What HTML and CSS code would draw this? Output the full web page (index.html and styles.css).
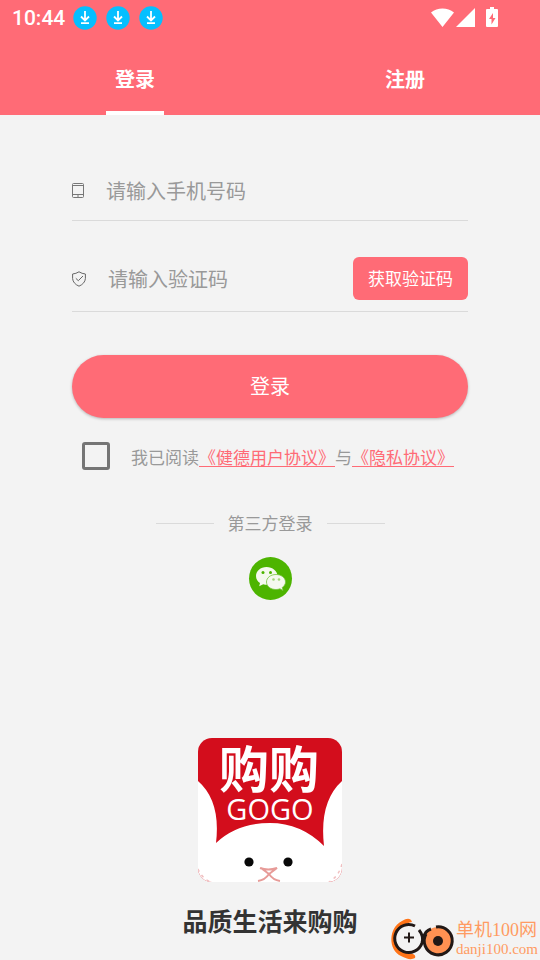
FILE: index.html
```html
<!DOCTYPE html>
<html lang="zh-CN">
<head>
<meta charset="utf-8">
<meta name="viewport" content="width=device-width, initial-scale=1">
<title>登录</title>
<link rel="stylesheet" href="styles.css">
</head>
<body>
<header class="top">
  <div class="status">
    <span class="time">10:44</span>
    <span class="downloads">
      <svg class="dl" viewBox="0 0 24 24"><circle cx="12" cy="12" r="11.700" fill="#05bfff"/><path d="M12 5v9M8 10.500l4 4 4-4M8 17.200h8" fill="none" stroke="#fff" stroke-width="1.800"/></svg>
      <svg class="dl" viewBox="0 0 24 24"><circle cx="12" cy="12" r="11.700" fill="#05bfff"/><path d="M12 5v9M8 10.500l4 4 4-4M8 17.200h8" fill="none" stroke="#fff" stroke-width="1.800"/></svg>
      <svg class="dl" viewBox="0 0 24 24"><circle cx="12" cy="12" r="11.700" fill="#05bfff"/><path d="M12 5v9M8 10.500l4 4 4-4M8 17.200h8" fill="none" stroke="#fff" stroke-width="1.800"/></svg>
    </span>
    <svg class="signals" viewBox="0 0 68 20" fill="#fff"><path d="M0 4.500C6.500-.7 16.500-.7 23 4.500L11.500 19ZM25 19 44 0V19Z"/><path fill-rule="evenodd" d="M59 -1h4v2h3q1 0 1 1v16q0 1-1 1H56q-1 0-1-1V2q0-1 1-1h3ZM62 5 58 11h2.500v5.500l4-6.500H62Z"/></svg>
  </div>
  <nav class="tabs">
    <button class="tab active" type="button">登录</button>
    <button class="tab" type="button">注册</button>
  </nav>
</header>
<main class="page">
  <form class="form">
    <div class="field">
      <svg class="phone" viewBox="0 0 12 16" fill="none" stroke="#777"><rect x=".5" y=".5" width="11" height="14" rx="1"/><path d="M.5 2.500h11M.5 11.500h11M5 13h2"/></svg>
      <input type="tel" placeholder="请输入手机号码" aria-label="手机号码">
    </div>
    <div class="field code">
      <svg class="shield" viewBox="0 0 14 16" fill="none" stroke="#666"><path d="M7 .8Q10 2.700 13.400 3V7.500Q13 12.500 7 15.200 1 12.500.6 7.500V3Q4 2.700 7 .8Z"/><path d="M3.800 7.300 6.300 9.700 11 5"/></svg>
      <input type="text" placeholder="请输入验证码" aria-label="验证码">
      <button class="get-code" type="button">获取验证码</button>
    </div>
    <button class="submit" type="submit">登录</button>
    <div class="agree">
      <input type="checkbox" id="agree">
      <label for="agree">我已阅读<a href="#">《健德用户协议》</a>与<a href="#">《隐私协议》</a></label>
    </div>
  </form>
  <div class="divider"><span>第三方登录</span></div>
  <button class="wechat" type="button" aria-label="微信登录">
    <svg viewBox="0 0 43 43"><circle cx="21.500" cy="21.500" r="21.500" fill="#4db400"/><path d="M17.500 10C11.500 10 7 14 7 19c0 3 1.500 5.500 4 7l-.8 3.200 4-2q4 1 8 0C26 26 28.500 23 28.500 19c0-5-5-9-11-9Z" fill="#f5f9ef"/><path d="M27 17.500c-5.500 0-9.500 3.300-9.500 7.500s4 7.500 9.500 7.500q2 0 4-.7l3 1.700-.8-3c2-1.300 3.300-3.300 3.300-5.500 0-4.200-4.300-7.500-9.500-7.500Z" fill="#f5f9ef" stroke="#75c43b" stroke-width=".8"/><g fill="#4db400"><circle cx="14" cy="15.500" r="1.500"/><circle cx="21.500" cy="15.500" r="1.500"/></g><g fill="#a4d77c"><circle cx="24.500" cy="22.500" r="1.300"/><circle cx="30" cy="22.500" r="1.300"/></g></svg>
  </button>
  <svg class="brand" viewBox="0 0 144 144">
    <clipPath id="tile"><rect width="144" height="144" rx="14"/></clipPath>
    <g clip-path="url(#tile)">
      <path d="M0 0H144V144H0Z" fill="#d30d1c"/>
      <path d="M0 43Q23 63 18 105 39 85 72 85 103 85 126 108 121 64 144 43V144H0Z" fill="#fff"/>
      <circle cx="51" cy="124" r="4.600" fill="#080808"/><circle cx="90" cy="124" r="4.600" fill="#080808"/>
      <path d="M62 130q8 3 17 0l-8 6-8-6M71 136q-4 6-11 7M71 136q4 6 11 7" fill="none" stroke="#e79b98" stroke-width="2"/>
      <path d="M0 131q3 8 12 13M144 126q-3 12-13 18" fill="none" stroke="#f1bfc0" stroke-width="1.500" stroke-dasharray="3 4"/>
    </g>
    <text class="brand-cn" x="71" y="50" text-anchor="middle">购购</text>
    <text class="brand-en" x="72" y="82" text-anchor="middle">GOGO</text>
  </svg>
  <h1 class="slogan">品质生活来购购</h1>
</main>
<aside class="watermark">
  <svg viewBox="0 0 64 43" fill="none"><path d="M22 5Q20-1 12 4C-2 11-2 33 11 39q9 5 14 2 1-3-2-4-13-1-18-10C2 16 9 8 22 5Z" fill="#ff7418"/><path d="M27.500 10A14 14 0 1 0 32 26Q34 21 31 17" fill="#f3f3f3"/><path d="M25 9A14 14 0 1 0 32 26Q34 19 29 13" stroke="#211816" stroke-width="3"/><path d="M19 15.500v10M14 20.500h10" stroke="#211816" stroke-width="2"/><circle cx="48" cy="24" r="14" fill="#ff9152"/><path d="M46 10A14 14 0 1 1 36 17" stroke="#211816" stroke-width="3"/><path d="M34 20Q35 14 41 12" stroke="#211816" stroke-width="3"/><circle cx="48" cy="24" r="5" fill="#211816"/></svg>
  <div class="mark-text"><span class="mark-name">单机100网</span><span class="mark-url">danji100.com</span></div>
</aside>
</body>
</html>
```

FILE: styles.css
```css
* { box-sizing: border-box; }
body {
  margin: 0;
  min-height: 100vh;
  position: relative;
  background: #f3f3f3;
  color: #999;
  font-family: Roboto, "Noto Sans CJK SC", sans-serif;
}
button, input { font: inherit; border: 0; padding: 0; margin: 0; }
button { cursor: pointer; }
svg { display: block; flex: none; overflow: visible; }
.top { background: #ff6b76; color: #fff; }
.status { display: flex; align-items: center; height: 36px; padding: 0 41px 0 12px; }
.time { font-size: 21px; font-weight: 500; line-height: 24px; }
.downloads { display: flex; gap: 9px; margin-left: 8px; }
.dl { width: 24px; height: 24px; }
.signals { width: 68px; height: 20px; margin-left: auto; }
.tabs { display: flex; height: 79px; }
.tab {
  flex: 1;
  display: flex;
  flex-direction: column;
  align-items: center;
  padding-top: 29px;
  background: none;
  color: #fff;
  font-size: 20px;
  font-weight: 700;
  line-height: 30px;
}
.tab.active::after { content: ""; width: 58px; height: 4px; margin-top: auto; background: #fff; }
.page { display: flex; flex-direction: column; align-items: center; padding: 46px 72px 20px; }
.form { width: 100%; }
.field { display: flex; align-items: center; height: 60px; border-bottom: 1px solid #dadada; }
.field input {
  flex: 1;
  min-width: 0;
  margin-left: 22px;
  padding-top: 2px;
  background: none;
  color: #333;
  font-size: 20px;
  line-height: 30px;
  outline: 0;
}
.field input::placeholder { color: #999; opacity: 1; }
.phone { width: 12px; height: 16px; }
.shield { width: 14px; height: 16px; }
.code { height: 66px; margin-top: 25px; }
.get-code { width: 115px; height: 43px; padding-bottom: 2px; border-radius: 6px; background: #ff6b76; color: #fff; font-size: 17px; }
.submit {
  display: block;
  width: 100%;
  height: 63px;
  margin-top: 43px;
  padding-bottom: 2px;
  border-radius: 32px;
  background: #ff6b76;
  color: #fff;
  font-size: 20px;
  box-shadow: 0 1px 3px rgba(0, 0, 0, .25);
}
.agree { display: flex; align-items: center; margin-top: 24px; padding-left: 10px; font-size: 17px; line-height: 24px; white-space: nowrap; }
.agree input { appearance: none; width: 28px; height: 28px; flex: none; border: 3px solid #757575; border-radius: 3px; }
.agree input:checked { background: #ff6b76; }
.agree label { margin-left: 21px; padding-top: 4px; }
.agree a { color: #ff6b76; text-decoration-thickness: 1px; text-underline-offset: 2px; }
.divider { display: flex; align-items: center; gap: 14px; margin-top: 40px; font-size: 17px; line-height: 24px; }
.divider span { padding-top: 2px; }
.divider::before, .divider::after { content: ""; width: 58px; height: 1px; background: #dadada; }
.wechat { width: 43px; height: 43px; margin-top: 21px; background: none; }
.brand { width: 144px; height: 144px; margin-top: 138px; }
.brand-cn { font-family: "Noto Sans CJK SC", sans-serif; font-size: 50px; font-weight: 700; fill: #fff; }
.brand-en { font-family: "Open Sans", sans-serif; font-size: 29px; fill: #fff; }
.slogan { margin: 22px 0 0; color: #333; font-size: 25px; font-weight: 700; line-height: 38px; }
.watermark { position: absolute; right: 2px; bottom: 2px; display: flex; align-items: center; gap: 2px; color: #ff9b62; }
.watermark svg { width: 64px; height: 43px; }
.mark-text { display: flex; flex-direction: column; font-family: "Liberation Serif", "Noto Sans CJK SC", serif; }
.mark-name { font-size: 18px; line-height: 21px; }
.mark-url { font-size: 15px; line-height: 16px; }
```
